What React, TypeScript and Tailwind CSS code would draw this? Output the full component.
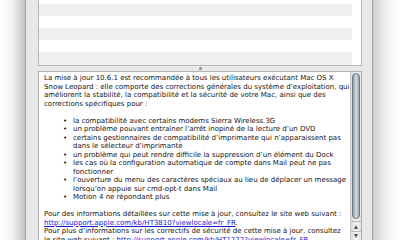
import React from "react";

const bullets: string[][] = [
  ["la compatibilité avec certains modems Sierra Wireless 3G"],
  ["un problème pouvant entraîner l’arrêt inopiné de la lecture d’un DVD"],
  ["certains gestionnaires de compatibilité d’imprimante qui n’apparaissent pas", "dans le sélecteur d’imprimante"],
  ["un problème qui peut rendre difficile la suppression d’un élément du Dock"],
  ["les cas où la configuration automatique de compte dans Mail peut ne pas", "fonctionner"],
  ["l’ouverture du menu des caractères spéciaux au lieu de déplacer un message", "lorsqu’on appuie sur cmd-opt-t dans Mail"],
  ["Motion 4 ne répondant plus"],
];

export default function App() {
  return (
    <div
      className="w-[400px] h-[240px] overflow-hidden flex bg-white text-[#141414]"
      style={{ fontFamily: '"DejaVu Sans", "Noto Sans", sans-serif' }}
    >
      <div className="w-[25px] h-full bg-gradient-to-r from-white via-[#f2f2f2] to-[#c4c4c4]" />
      <div className="w-[348px] h-full bg-[#e8e8e8] border-l border-r border-[#a3a3a3] pl-[12px] pr-[10px] flex flex-col">
        <div className="h-[66px] border-l border-r border-b border-[#b9b9b9] bg-white flex">
          <div className="flex-1 flex flex-col">
            <div className="h-[4px] bg-white" />
            <div className="h-[12px] bg-[#efefef]" />
            <div className="h-[12px] bg-white" />
            <div className="h-[12px] bg-[#efefef]" />
            <div className="h-[12px] bg-white" />
            <div className="h-[13px] bg-[#efefef]" />
          </div>
          <div className="w-[9px] bg-white" />
        </div>
        <div className="h-[5px] flex items-center justify-center">
          <div className="w-[3px] h-[3px] rounded-full bg-[#8a8a8a]" />
        </div>
        <div className="flex-1 border-l border-r border-t border-[#b1b1b1] bg-white flex min-h-0">
          <div className="flex-1 pl-[5px] pt-[2px] text-[7px] leading-[8.5px] whitespace-nowrap overflow-hidden">
            <div>La mise à jour 10.6.1 est recommandée à tous les utilisateurs exécutant Mac OS X</div>
            <div>Snow Leopard : elle comporte des corrections générales du système d’exploitation, qui</div>
            <div>améliorent la stabilité, la compatibilité et la sécurité de votre Mac, ainsi que des</div>
            <div>corrections spécifiques pour :</div>
            <div className="h-[8.5px]" />
            {bullets.map((b, i) => (
              <div key={i} className="flex">
                <div className="w-[29px] pl-[19px]">•</div>
                <div>
                  {b.map((l, j) => (
                    <div key={j}>{l}</div>
                  ))}
                </div>
              </div>
            ))}
            <div className="h-[8.5px]" />
            <div>Pour des informations détaillées sur cette mise à jour, consultez le site web suivant :</div>
            <div>
              <span className="text-[#1a1ad6] underline">http://support.apple.com/kb/HT3810?viewlocale=fr_FR</span>.
            </div>
            <div>Pour plus d’informations sur les correctifs de sécurité de cette mise à jour, consultez</div>
            <div>
              le site web suivant : <span className="text-[#1a1ad6] underline">http://support.apple.com/kb/HT1222?viewlocale=fr_FR</span>.
            </div>
          </div>
          <div className="w-[11px] border-l border-[#c8c8c8] bg-gradient-to-r from-[#dcdcdc] via-[#f4f4f4] to-[#e2e2e2] flex flex-col">
            <div className="mx-[1px] mt-[1px] h-[146px] rounded-full border border-[#6f7886] bg-gradient-to-r from-[#8d97a6] via-[#d8dde5] to-[#9aa3b0]" />
            <div className="flex-1" />
            <div className="h-[10px] border-t border-[#b8b8b8] flex items-center justify-center">
              <div className="w-0 h-0 border-l-[2.5px] border-r-[2.5px] border-b-[4px] border-l-transparent border-r-transparent border-b-[#555]" />
            </div>
            <div className="h-[9px] border-t border-[#b8b8b8] flex items-center justify-center">
              <div className="w-0 h-0 border-l-[2.5px] border-r-[2.5px] border-t-[4px] border-l-transparent border-r-transparent border-t-[#555]" />
            </div>
          </div>
        </div>
      </div>
      <div className="flex-1 h-full bg-gradient-to-r from-[#cfcfcf] via-[#f2f2f2] to-white" />
    </div>
  );
}
